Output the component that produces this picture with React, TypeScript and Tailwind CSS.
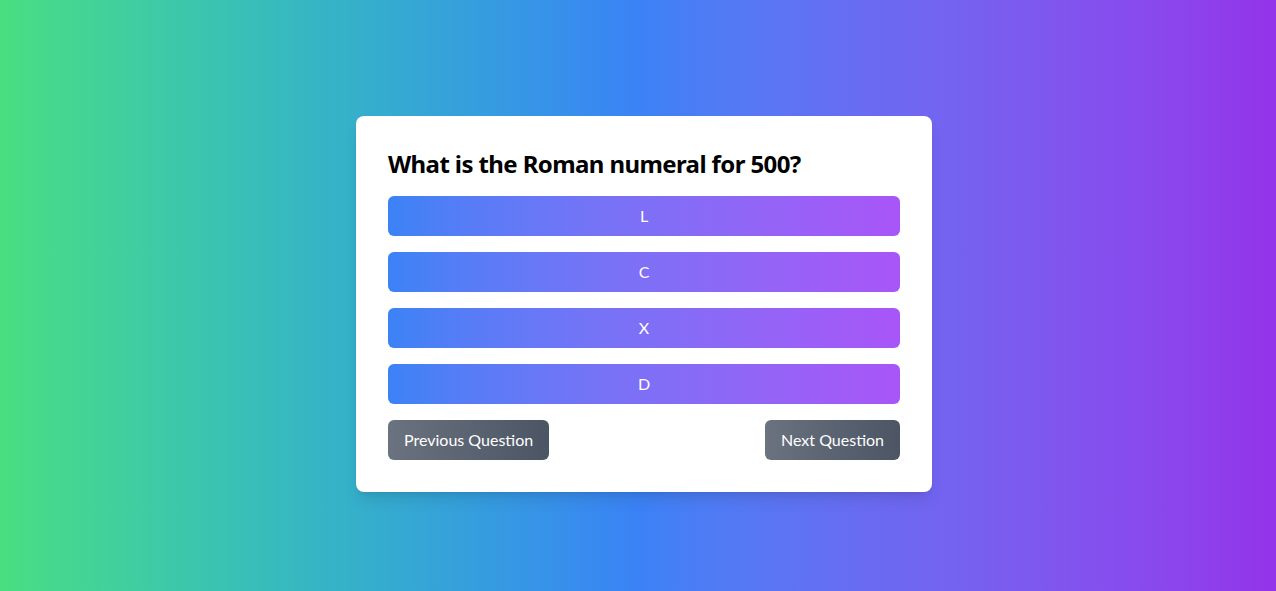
export default function App() {
  const options = ["L", "C", "X", "D"];

  return (
    <div
      className="min-h-screen flex items-center justify-center pt-4 pl-3 bg-gradient-to-r from-[#4ade80] via-[#3b82f6] to-[#9333ea]"
      style={{ fontFamily: "Lato, 'Noto Sans', sans-serif" }}
    >
      <div className="w-full max-w-xl bg-white rounded-lg shadow-lg p-8">
        <h1
          className="text-2xl font-bold text-black mb-4 tracking-[-0.6px]"
          style={{ fontFamily: "'Noto Sans', sans-serif" }}
        >
          What is the Roman numeral for 500?
        </h1>
        <div className="flex flex-col gap-4">
          {options.map((opt) => (
            <button
              key={opt}
              className="w-full py-2 rounded-md text-white text-base bg-gradient-to-r from-[#3b82f6] to-[#a855f7]"
            >
              {opt}
            </button>
          ))}
          <div className="flex justify-between">
            <button className="px-4 py-2 rounded-md text-white bg-gradient-to-r from-[#6b7280] to-[#4b5563]">
              Previous Question
            </button>
            <button className="px-4 py-2 rounded-md text-white bg-gradient-to-r from-[#6b7280] to-[#4b5563]">
              Next Question
            </button>
          </div>
        </div>
      </div>
    </div>
  );
}
